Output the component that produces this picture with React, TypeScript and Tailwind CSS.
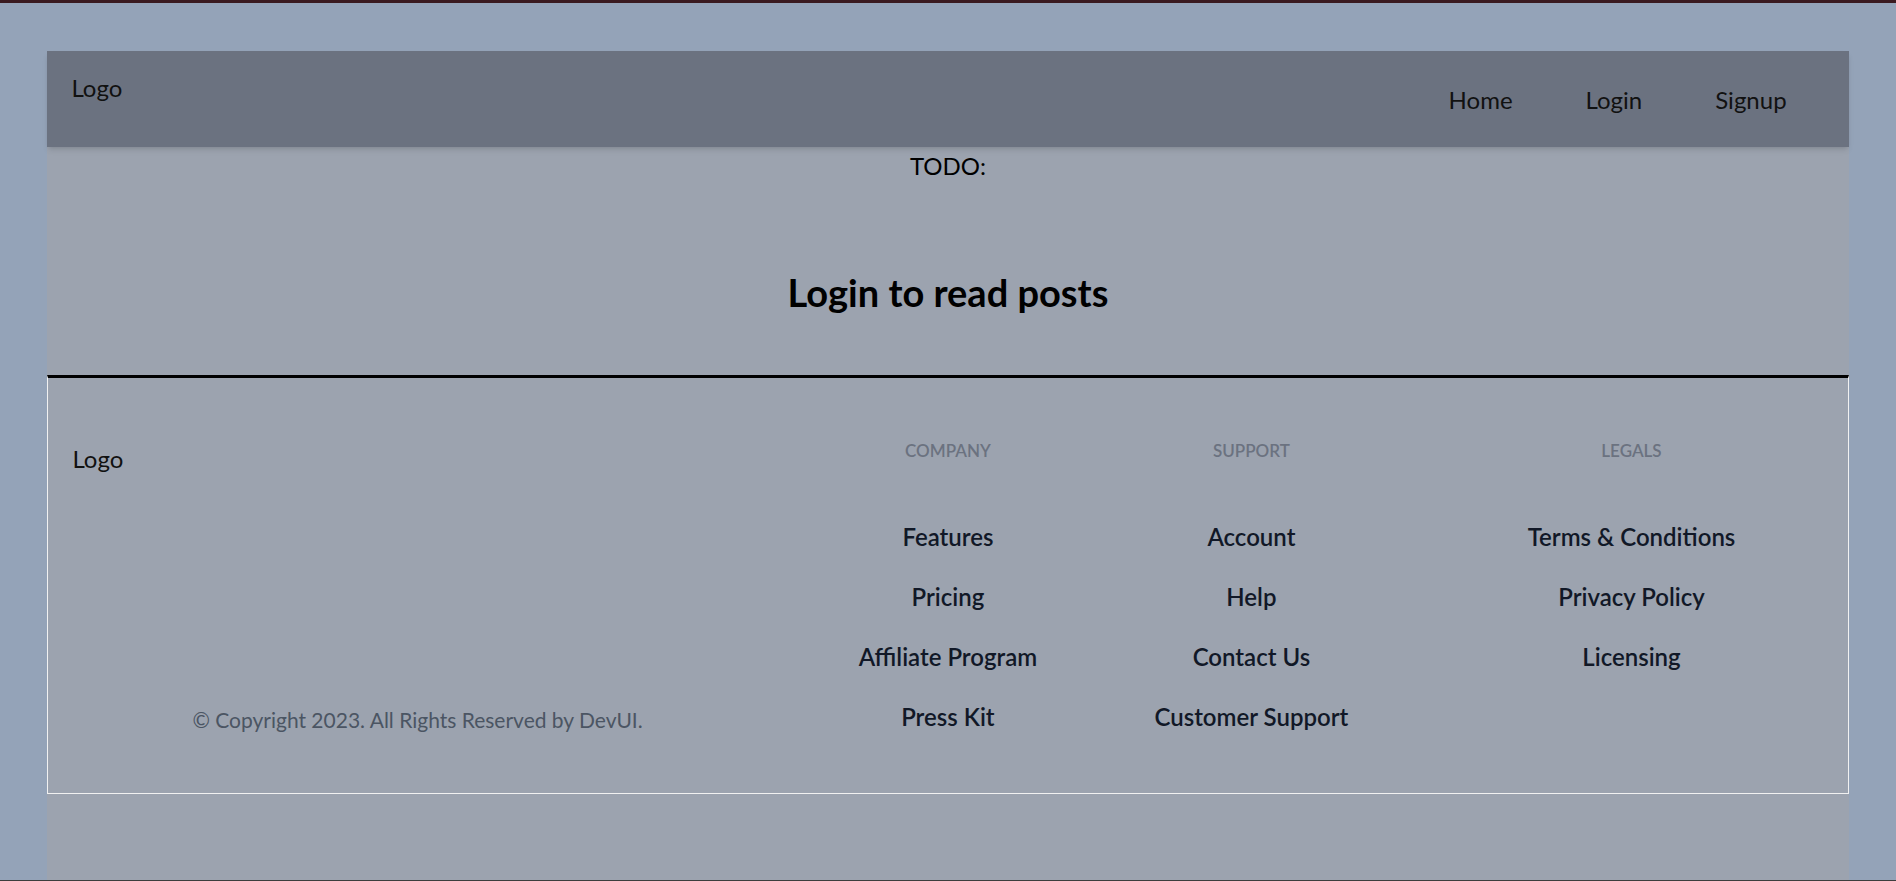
const company = ['Features', 'Pricing', 'Affiliate Program', 'Press Kit'];
const support = ['Account', 'Help', 'Contact Us', 'Customer Support'];
const legals = ['Terms & Conditions', 'Privacy Policy', 'Licensing'];

function FooterColumn({ title, links, width }: { title: string; links: string[]; width: string }) {
  return (
    <div className={`${width} flex flex-col items-center text-center`}>
      <h3 className="h-[24px] text-[17px] leading-[24px] font-semibold uppercase text-[#6b7280]">{title}</h3>
      <ul className="mt-[59px] flex flex-col gap-[30px]">
        {links.map((link) => (
          <li key={link}>
            <a href="#" className="text-[24px] leading-[30px] font-semibold text-[#111827]">
              {link}
            </a>
          </li>
        ))}
      </ul>
    </div>
  );
}

export default function App() {
  return (
    <div
      className="h-[881px] overflow-hidden flex flex-col bg-[#94a3b8] border-t-[3px] border-t-[#3a1a20] border-b border-b-[#3d3d3d]"
      style={{ fontFamily: '"Segoe UI", Lato, "Noto Sans", sans-serif' }}
    >
      <div className="mt-[48px] mx-auto w-[95%] flex-1 bg-[#9ca3af]">
        {/* header */}
        <header className="h-[96px] flex justify-between bg-[#6b7280] shadow-md pl-[24px] pr-[60px]">
          <div className="pt-[21px] text-[24px] leading-[32px] text-[#111]">Logo</div>
          <nav className="flex items-center gap-[73px] pt-[2px] pr-[2px] text-[24px] leading-[32px] text-[#111]">
            <a href="#">Home</a>
            <a href="#">Login</a>
            <a href="#">Signup</a>
          </nav>
        </header>

        <main className="flex flex-col items-center pt-[1px]">
          <p className="text-[24px] leading-[36px] text-black">TODO:</p>
          <h2 className="mt-[85px] mb-[60px] text-[38px] leading-[46px] font-bold text-black">Login to read posts</h2>
        </main>

        {/* footer */}
        <footer className="flex border-t-[3px] border-t-black border-x border-b border-x-[#f1f1f1] border-b-[#f1f1f1] pt-[61px] pb-[61px]">
          <div className="w-[760px] flex flex-col justify-between pl-[24px]">
            <div className="mt-[5px] text-[24px] leading-[30px] text-[#111]">Logo</div>
            <p className="ml-[120px] mb-[-2px] text-[21px] leading-[28px] text-[#4b5563]">
              © Copyright 2023. All Rights Reserved by DevUI.
            </p>
          </div>
          <FooterColumn title="Company" links={company} width="w-[279px]" />
          <FooterColumn title="Support" links={support} width="w-[328px]" />
          <FooterColumn title="Legals" links={legals} width="flex-1" />
        </footer>
      </div>
    </div>
  );
}
